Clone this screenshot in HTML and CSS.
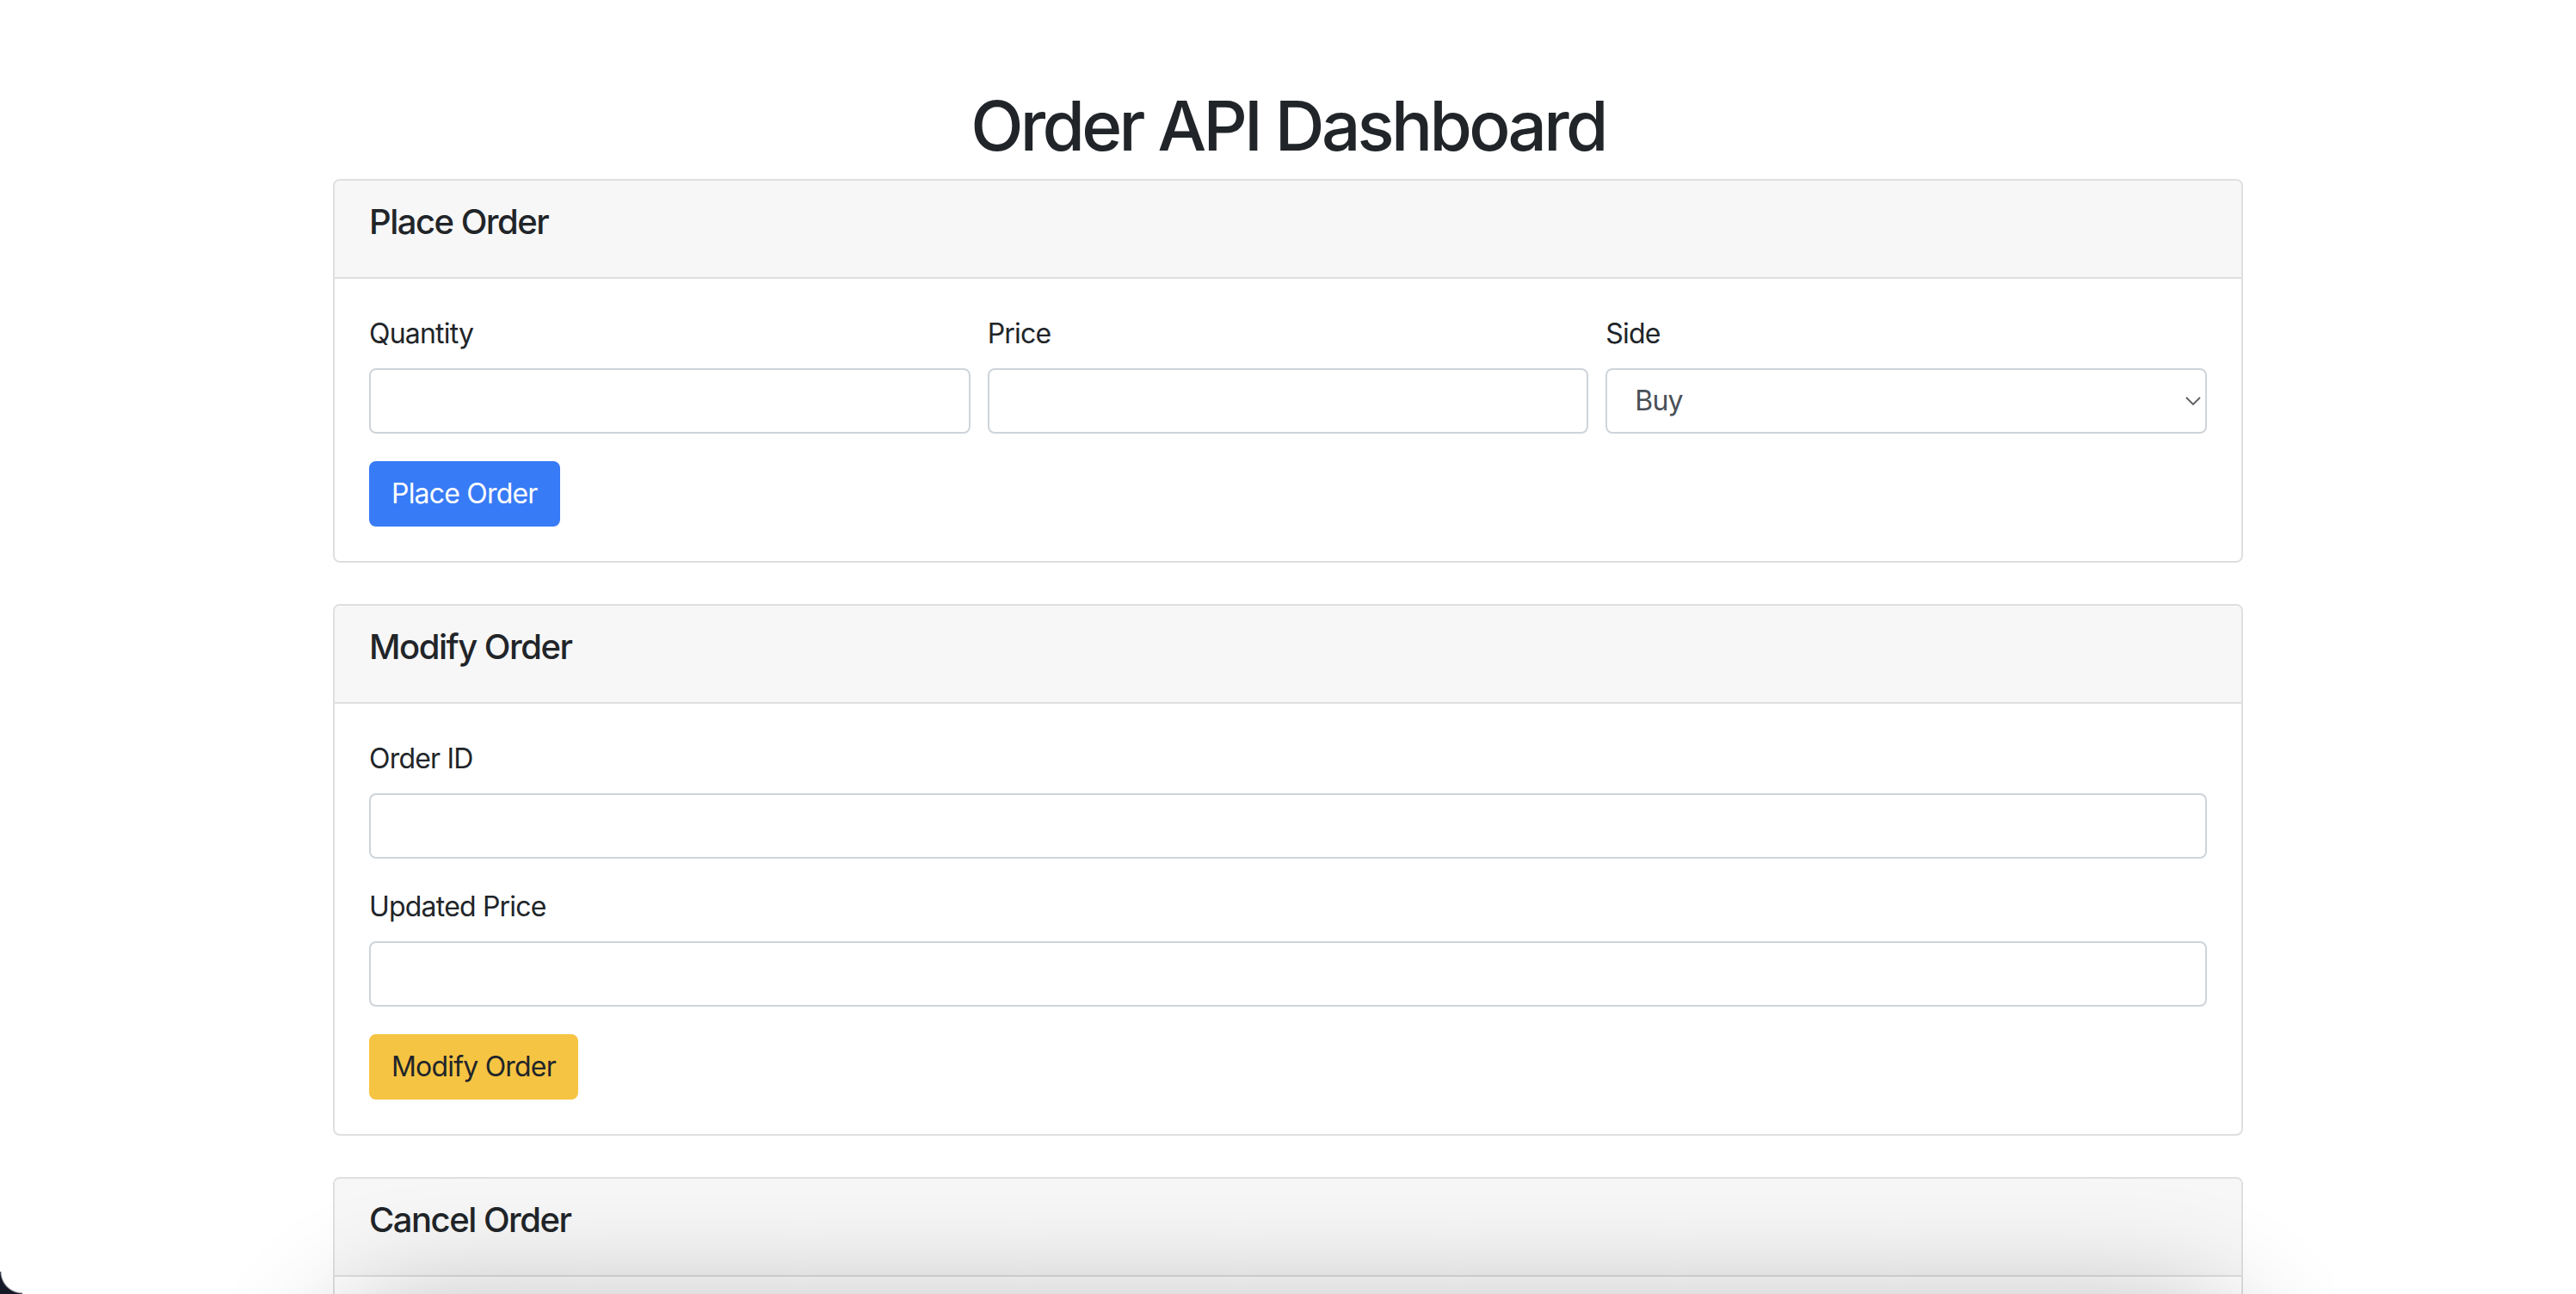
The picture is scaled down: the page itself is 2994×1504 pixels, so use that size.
FILE: index.html
```html
<!DOCTYPE html>
<html lang="en">
<head>
<meta charset="utf-8">
<title>Order API Dashboard</title>
<link rel="stylesheet" href="styles.css">
</head>
<body>
<div class="container">
  <h1 class="page-title">Order API Dashboard</h1>

  <section class="card">
    <div class="card-header"><h5 class="card-title">Place Order</h5></div>
    <div class="card-body">
      <div class="form-row">
        <div class="form-group col">
          <label class="form-label">Quantity</label>
          <input class="form-control" type="number">
        </div>
        <div class="form-group col">
          <label class="form-label">Price</label>
          <input class="form-control" type="number">
        </div>
        <div class="form-group col">
          <label class="form-label">Side</label>
          <div class="select-wrap">
            <select class="form-control form-select">
              <option>Buy</option>
              <option>Sell</option>
            </select>
            <svg class="select-arrow" width="18" height="10" viewBox="0 0 18 10"><path d="M1 1 L9 9 L17 1" fill="none" stroke="#5a5d63" stroke-width="1.8"/></svg>
          </div>
        </div>
      </div>
      <button class="btn btn-primary">Place Order</button>
    </div>
  </section>

  <section class="card">
    <div class="card-header"><h5 class="card-title">Modify Order</h5></div>
    <div class="card-body">
      <div class="form-group">
        <label class="form-label">Order ID</label>
        <input class="form-control" type="text">
      </div>
      <div class="form-group">
        <label class="form-label">Updated Price</label>
        <input class="form-control" type="number">
      </div>
      <button class="btn btn-warning">Modify Order</button>
    </div>
  </section>

  <section class="card">
    <div class="card-header"><h5 class="card-title">Cancel Order</h5></div>
    <div class="card-body card-body-cut"></div>
  </section>
</div>

<div class="dock-shadow"></div>
<div class="window-corner"></div>
</body>
</html>
```
FILE: styles.css
```css
html, body {
  margin: 0;
  padding: 0;
  background: #ffffff;
}

body {
  font-family: Inter, "Noto Sans", "Liberation Sans", sans-serif;
  font-size: 32px;
  line-height: 48px;
  color: #212529;
  overflow: hidden;
  height: 1504px;
}

.container {
  max-width: 2220px;
  margin: 96px auto 0;
  padding: 0 30px;
}

.page-title {
  font-size: 80px;
  font-weight: 500;
  line-height: 1.2;
  margin: 0 0 16px;
  text-align: center;
  letter-spacing: -3.7px;
  position: relative;
  top: 2px;
}

.card {
  background: #fff;
  border: 2px solid #dfdfdf;
  border-radius: 8px;
  margin-bottom: 48px;
}

.card-header {
  background: #f7f7f7;
  border-bottom: 2px solid #dfdfdf;
  border-radius: 6px 6px 0 0;
  padding: 24px 40px;
}

.card-title {
  font-size: 40px;
  font-weight: 500;
  line-height: 1.2;
  margin: 0 0 16px;
  letter-spacing: -1.5px;
}

.card-body {
  padding: 40px;
}

.card-body-cut {
  height: 200px;
}

.form-row {
  display: flex;
  margin: 0 -10px;
}

.col {
  flex: 1 1 0;
  min-width: 0;
  padding: 0 10px;
}

.form-group {
  margin-bottom: 32px;
}

.form-label {
  display: inline-block;
  margin-bottom: 16px;
  letter-spacing: -0.8px;
}

.form-control {
  display: block;
  box-sizing: border-box;
  width: 100%;
  height: 76px;
  padding: 12px 24px;
  font-family: inherit;
  font-size: 32px;
  line-height: 48px;
  color: #495057;
  background: #fff;
  border: 2px solid #ced4da;
  border-radius: 8px;
  margin: 0;
  outline: none;
}

.select-wrap {
  position: relative;
}

.form-select {
  -webkit-appearance: none;
  appearance: none;
  padding-left: 32px;
  letter-spacing: -0.8px;
}

.select-arrow {
  position: absolute;
  right: 7px;
  top: 33px;
  pointer-events: none;
}

.btn {
  display: inline-block;
  font-family: inherit;
  font-size: 32px;
  line-height: 48px;
  font-weight: 400;
  padding: 12px 24px;
  border: 2px solid transparent;
  border-radius: 8px;
  cursor: pointer;
  letter-spacing: -0.8px;
}

.btn-primary {
  background: #387bf6;
  border-color: #387bf6;
  color: #fff;
}

.btn-warning {
  background: #f6c443;
  border-color: #f6c443;
  color: #212529;
}

.dock-shadow {
  position: fixed;
  left: 420px;
  right: 420px;
  top: 1560px;
  height: 200px;
  border-radius: 60px;
  background: #888;
  box-shadow: 0 0 140px 40px rgba(0, 0, 0, 0.3);
  pointer-events: none;
}

.window-corner {
  position: fixed;
  left: 0;
  bottom: 0;
  width: 26px;
  height: 26px;
  background: radial-gradient(circle at 100% 0, rgba(0,0,0,0) 24px, #151827 26px);
  pointer-events: none;
}
```
